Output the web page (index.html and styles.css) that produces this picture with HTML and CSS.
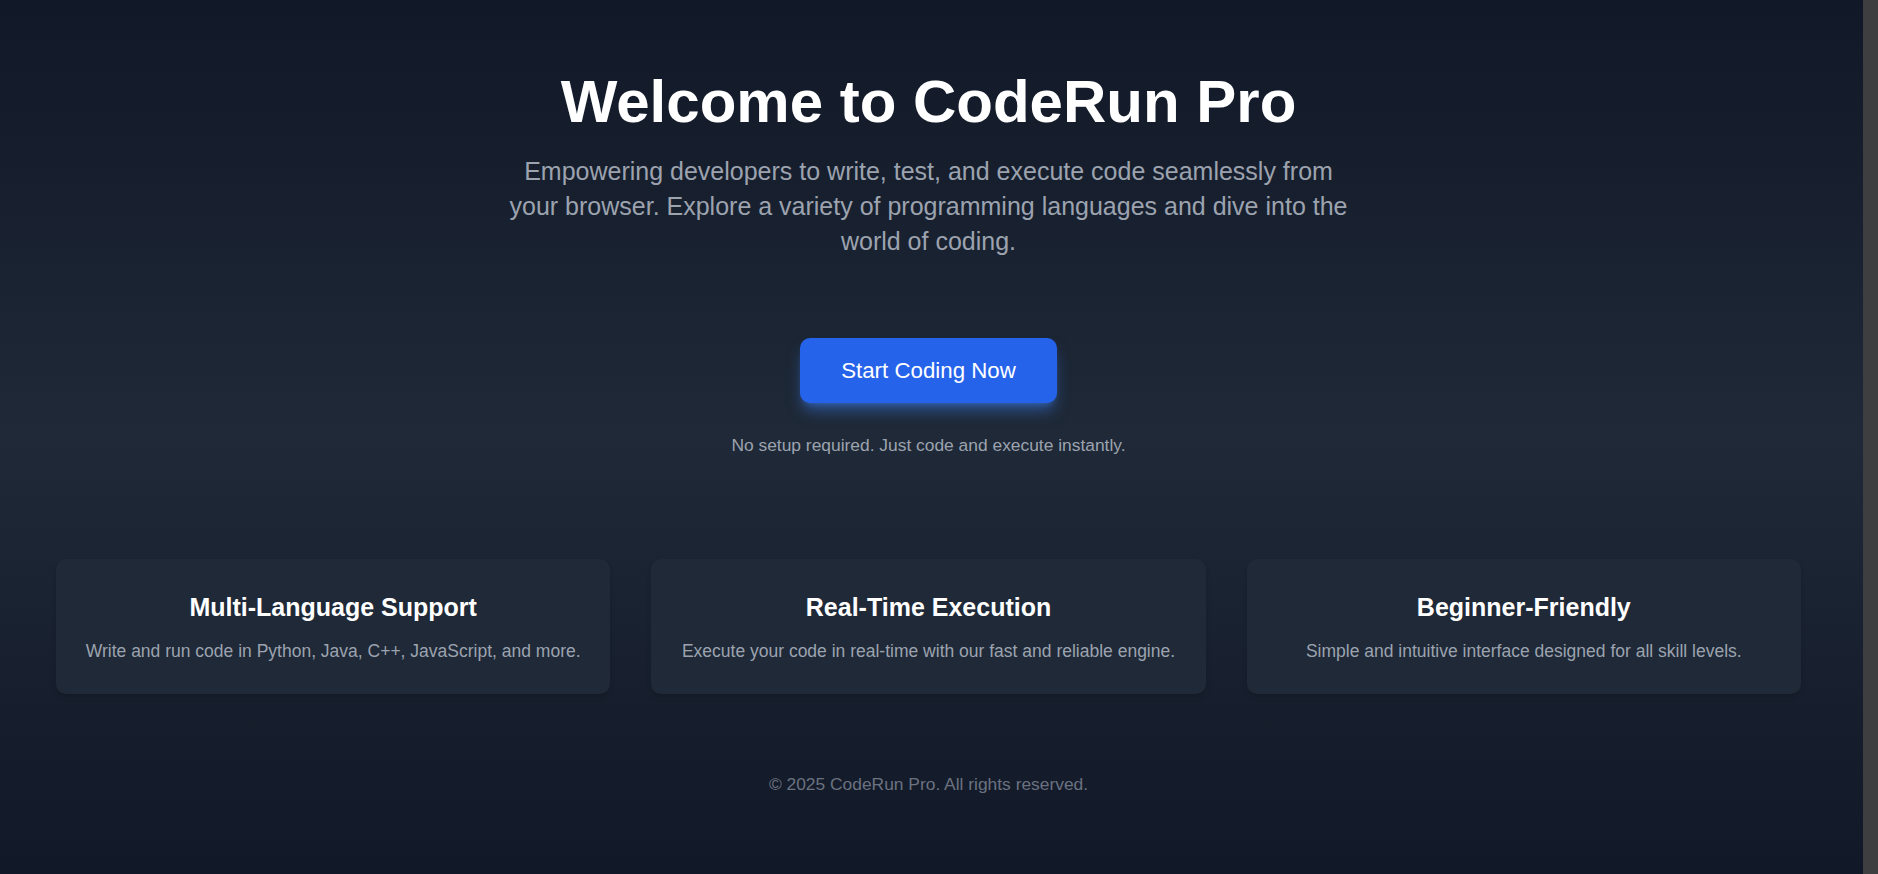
FILE: index.html
```html
<!DOCTYPE html>
<html lang="en">
<head>
<meta charset="utf-8">
<title>CodeRun Pro</title>
<link rel="stylesheet" href="styles.css">
</head>
<body>
  <div class="page">
    <header class="hero">
      <h1 class="hero-title">Welcome to CodeRun Pro</h1>
      <p class="hero-subtitle">Empowering developers to write, test, and execute code seamlessly from your browser. Explore a variety of programming languages and dive into the world of coding.</p>
      <button class="cta" type="button">Start Coding Now</button>
      <p class="cta-note">No setup required. Just code and execute instantly.</p>
    </header>

    <section class="features">
      <div class="feature-card">
        <h2 class="feature-title">Multi-Language Support</h2>
        <p class="feature-text">Write and run code in Python, Java, C++, JavaScript, and more.</p>
      </div>
      <div class="feature-card">
        <h2 class="feature-title">Real-Time Execution</h2>
        <p class="feature-text">Execute your code in real-time with our fast and reliable engine.</p>
      </div>
      <div class="feature-card">
        <h2 class="feature-title">Beginner-Friendly</h2>
        <p class="feature-text">Simple and intuitive interface designed for all skill levels.</p>
      </div>
    </section>

    <footer class="footer">
      <p class="footer-text">© 2025 CodeRun Pro. All rights reserved.</p>
    </footer>
  </div>
</body>
</html>
```

FILE: styles.css
```css
* {
  box-sizing: border-box;
}

html {
  margin: 0;
  padding: 0;
  background: #3e3e40;
}

body {
  margin: 0 15px 0 0;
  padding: 0;
  font-family: "Liberation Sans", Arial, Helvetica, sans-serif;
  background: linear-gradient(to bottom, #111827 0%, #1f2937 50%, #111827 100%);
  color: #ffffff;
}

.page {
  min-height: 874px;
  display: flex;
  flex-direction: column;
  padding: 72px 6px 0 0;
}

.hero {
  display: flex;
  flex-direction: column;
  align-items: center;
  text-align: center;
}

.hero-title {
  margin: 0;
  font-size: 60px;
  line-height: 60px;
  font-weight: 700;
  color: #ffffff;
}

.hero-subtitle {
  margin: 22px 0 0;
  max-width: 850px;
  font-size: 25px;
  line-height: 35px;
  color: #9ca3af;
}

.cta {
  margin-top: 79px;
  padding: 18px 41px;
  font-family: inherit;
  font-size: 22.3px;
  line-height: 29px;
  color: #ffffff;
  background: #2563eb;
  border: none;
  border-radius: 10px;
  box-shadow: 0 10px 15px -3px rgba(59, 130, 246, 0.5), 0 4px 6px -4px rgba(59, 130, 246, 0.5);
  cursor: pointer;
}

.cta-note {
  margin: 30px 0 0;
  font-size: 17.4px;
  line-height: 24px;
  color: #9ca3af;
}

.features {
  margin-top: 102px;
  padding: 0 56px;
  display: grid;
  grid-template-columns: repeat(3, 1fr);
  gap: 41px;
}

.feature-card {
  padding: 32px 24px 31px;
  background: #1f2937;
  border-radius: 10px;
  text-align: center;
  box-shadow: 0 4px 6px -1px rgba(0, 0, 0, 0.1), 0 2px 4px -2px rgba(0, 0, 0, 0.1);
}

.feature-title {
  margin: 0;
  font-size: 25px;
  line-height: 32px;
  font-weight: 700;
  color: #ffffff;
}

.feature-text {
  margin: 16px 0 0;
  font-size: 17.5px;
  line-height: 24px;
  color: #9ca3af;
}

.footer {
  margin-top: 78px;
  padding-bottom: 60px;
  text-align: center;
}

.footer-text {
  margin: 0;
  font-size: 17.4px;
  line-height: 24px;
  color: #6b7280;
}
```
